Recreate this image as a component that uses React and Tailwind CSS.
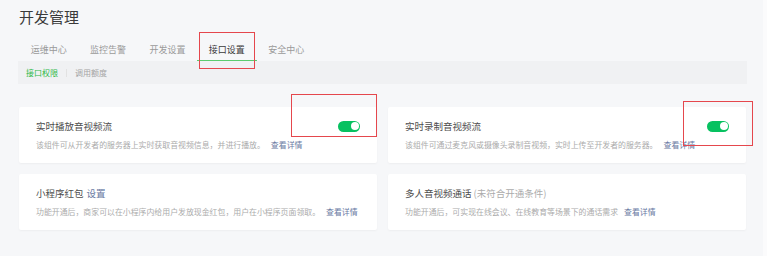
import React from "react";

const tabs = ["运维中心", "监控告警", "开发设置", "接口设置", "安全中心"];

const Toggle = () => (
    <div className="w-[22px] h-[11px] rounded-full bg-[#07c160] flex items-center justify-end pr-[1.5px]">
        <div className="w-[8px] h-[8px] rounded-full bg-white" />
    </div>
);

const Card = ({ title, extra, desc, toggle }) => (
    <div className="bg-white rounded-[2px] shadow-[0_1px_2px_rgba(0,0,0,0.04)] px-[17px] pt-[12px] pb-[12px]">
        <div className="flex items-center justify-between h-[14px]">
            <div className="text-[9.5px] leading-[14px] text-[#4d4d4d]">
                {title}
                {extra}
            </div>
            {toggle ? <Toggle /> : null}
        </div>
        <div className="mt-[6px] text-[7.9px] leading-[12px] text-[#ababab] whitespace-nowrap">
            {desc}
            <span className="ml-[6px] text-[#6a7aa3]">查看详情</span>
        </div>
    </div>
);

const App = () => {
    return (
        <div className="w-[767px] h-[256px] bg-[#f6f7f9] flex relative overflow-hidden font-['Noto_Sans_CJK_SC','Noto_Sans',sans-serif]">
            <div className="flex-1 pl-[19px] pr-[16px]">
                <h1 className="pt-[7px] text-[15px] leading-[20px] text-[#3a3a3a]">开发管理</h1>
                <div className="flex h-[34px]">
                    {tabs.map((t, i) => (
                        <div key={i} className="w-[59.4px] flex flex-col items-center pt-[16px]">
                            <span className={"text-[9px] leading-[14px] " + (i === 3 ? "text-[#3a3a3a]" : "text-[#9a9a9a]")}>{t}</span>
                            <div className={"mt-auto h-[1.5px] w-full " + (i === 3 ? "bg-[#5ccb6e]" : "bg-transparent")} />
                        </div>
                    ))}
                </div>
                <div className="-ml-[1px] h-[23px] bg-[#f0f1f3] flex items-center pl-[8px] text-[8px]">
                    <span className="text-[#2fb94a]">接口权限</span>
                    <span className="mx-[8px] w-px h-[8px] bg-[#e2e2e2]" />
                    <span className="text-[#a5a5a5]">调用额度</span>
                </div>
                <div className="mt-[23px] grid grid-cols-2 gap-[11px] pr-[1px]">
                    <Card title="实时播放音视频流" desc="该组件可从开发者的服务器上实时获取音视频信息，并进行播放。" toggle />
                    <Card title="实时录制音视频流" desc="该组件可通过麦克风或摄像头录制音视频，实时上传至开发者的服务器。" toggle />
                    <Card
                        title="小程序红包"
                        extra={<span className="ml-[3px] text-[#6a7aa3]">设置</span>}
                        desc="功能开通后，商家可以在小程序内给用户发放现金红包，用户在小程序页面领取。"
                    />
                    <Card
                        title="多人音视频通话"
                        extra={<span className="ml-[2px] text-[#ababab]">(未符合开通条件)</span>}
                        desc="功能开通后，可实现在线会议、在线教育等场景下的通话需求"
                    />
                </div>
            </div>
            <div className="w-[4px] bg-[#fbfbfc]" />

            <div className="absolute left-[199px] top-[32px] w-[56px] h-[37px] border border-[#e5474d]" />
            <div className="absolute left-[291px] top-[94px] w-[86px] h-[43px] border border-[#e5474d]" />
            <div className="absolute left-[683px] top-[101px] w-[70px] h-[45px] border border-[#e5474d]" />
        </div>
    );
};

export default App;
